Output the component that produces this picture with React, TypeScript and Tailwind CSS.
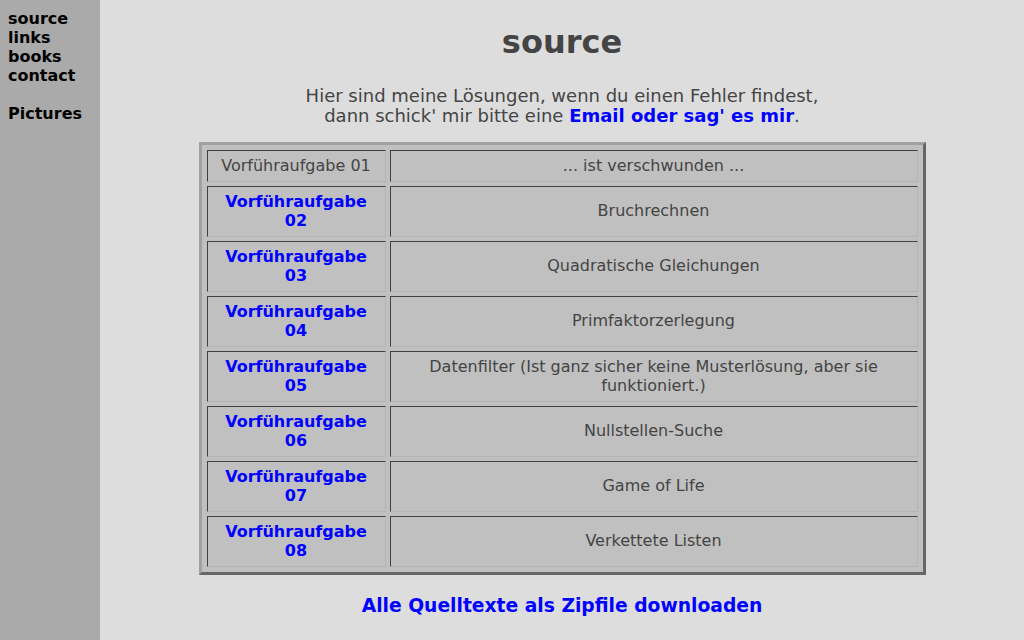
const tasks = [
  { nr: "02", title: "Bruchrechnen" },
  { nr: "03", title: "Quadratische Gleichungen" },
  { nr: "04", title: "Primfaktorzerlegung" },
  { nr: "05", title: "Datenfilter (Ist ganz sicher keine Musterlösung, aber sie funktioniert.)" },
  { nr: "06", title: "Nullstellen-Suche" },
  { nr: "07", title: "Game of Life" },
  { nr: "08", title: "Verkettete Listen" },
]

const navLinks = ["source", "links", "books", "contact"]

const cell =
  "border border-t-[#404040] border-l-[#404040] border-r-[#b4b4b4] border-b-[#b4b4b4] px-[5px] py-[5px] text-center align-middle leading-[19.5px]"

export default function App() {
  return (
    <div className="flex min-h-screen font-['DejaVu_Sans',Verdana,sans-serif] text-[16px] text-[#444]">
      <aside className="w-[100px] shrink-0 bg-[#aaaaaa] px-[8px] pt-[9px] text-[16px] font-bold leading-[19px] text-black">
        {navLinks.map((l) => (
          <a key={l} href="#" className="block">
            {l}
          </a>
        ))}
        <br />
        <a href="#" className="block">
          Pictures
        </a>
      </aside>

      <main className="flex flex-1 flex-col items-center bg-[#dddddd] pb-6">
        <h1 className="mt-[23px] text-[32px] font-bold leading-[38px] text-[#444]">source</h1>

        <p className="mt-[25px] text-center text-[18px] leading-[20px]">
          Hier sind meine Lösungen, wenn du einen Fehler findest,
          <br />
          dann schick' mir bitte eine{" "}
          <a href="#" className="font-bold text-[#0000ff]">
            Email oder sag' es mir
          </a>
          .
        </p>

        <table className="mt-[16px] w-[727px] border-separate border-spacing-[4px] border-[3px] border-t-[#a0a0a0] border-l-[#a0a0a0] border-r-[#666666] border-b-[#666666] bg-[#c0c0c0] p-px">
          <tbody>
            <tr>
              <td className={`${cell} w-[179px]`}>Vorführaufgabe 01</td>
              <td className={cell}>... ist verschwunden ...</td>
            </tr>
            {tasks.map((t) => (
              <tr key={t.nr}>
                <td className={`${cell} w-[179px]`}>
                  <a href="#" className="font-bold text-[#0000ff]">
                    Vorführaufgabe {t.nr}
                  </a>
                </td>
                <td className={cell}>{t.title}</td>
              </tr>
            ))}
          </tbody>
        </table>

        <a href="#" className="mt-[20px] text-[18.72px] font-bold leading-[22px] text-[#0000ff]">
          Alle Quelltexte als Zipfile downloaden
        </a>
      </main>
    </div>
  )
}
